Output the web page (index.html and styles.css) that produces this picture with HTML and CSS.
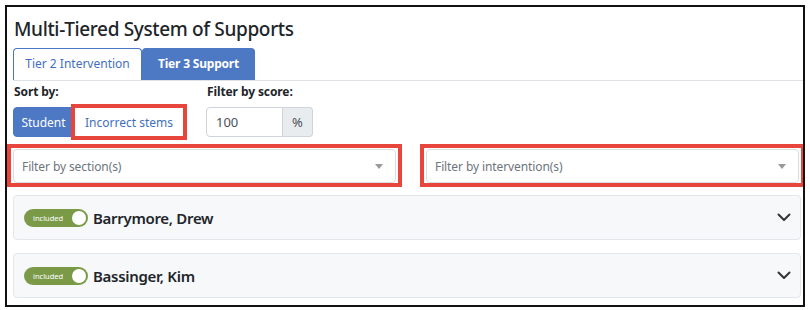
FILE: index.html
```html
<!DOCTYPE html>
<html lang="en">
  <head>
    <meta charset="UTF-8" />
    <meta name="viewport" content="width=device-width, initial-scale=1.0" />
    <title>Multi-Tiered System of Supports</title>
    <link rel="stylesheet" href="styles.css">
  </head>

  <body>
    <div class="frame">
      <div class="content">
        <h1 class="title">Multi-Tiered System of Supports</h1>

        <ul class="tabs">
          <li class="tab">Tier 2 Intervention</li>
          <li class="tab active">Tier 3 Support</li>
        </ul>

        <div class="controls">
          <div class="sort">
            <label>Sort by:</label>
            <div class="btn-group">
              <button class="btn btn-primary">Student</button>
              <button class="btn btn-outline marked">Incorrect stems</button>
            </div>
          </div>
          <div class="score">
            <label for="score">Filter by score:</label>
            <div class="input-group">
              <input type="text" id="score" value="100" />
              <span class="addon">%</span>
            </div>
          </div>
        </div>

        <div class="filters">
          <div class="mark-box">
            <div class="select">
              <span>Filter by section(s)</span>
              <span class="caret"></span>
            </div>
          </div>
          <div class="mark-box">
            <div class="select">
              <span>Filter by intervention(s)</span>
              <span class="caret"></span>
            </div>
          </div>
        </div>

        <div class="accordion">
          <div class="item">
            <div class="toggle"><span>included</span><span class="knob"></span></div>
            <span class="name">Barrymore, Drew</span>
            <svg class="chevron" width="14" height="9" viewBox="0 0 14 9">
              <path d="M1.5 1.5 L7 7 L12.5 1.5" fill="none" stroke="#333" stroke-width="2" stroke-linecap="round" stroke-linejoin="round" />
            </svg>
          </div>
          <div class="item">
            <div class="toggle"><span>included</span><span class="knob"></span></div>
            <span class="name">Bassinger, Kim</span>
            <svg class="chevron" width="14" height="9" viewBox="0 0 14 9">
              <path d="M1.5 1.5 L7 7 L12.5 1.5" fill="none" stroke="#333" stroke-width="2" stroke-linecap="round" stroke-linejoin="round" />
            </svg>
          </div>
        </div>
      </div>
    </div>
  </body>
</html>
```

FILE: styles.css
```css
* {
  margin: 0;
  padding: 0;
  box-sizing: border-box;
}

body {
  font-family: "Noto Sans", "Open Sans", sans-serif;
  background-color: #fff;
  color: #212529;
}

.frame {
  margin: 5px;
  width: 800px;
  height: 302px;
  border: 2px solid #111;
  overflow: hidden;
}

.content {
  padding: 0 0 0 6px;
}

.title {
  font-size: 19px;
  font-weight: 500;
  letter-spacing: -0.35px;
  line-height: 23px;
  margin: 11px 0 7px 1px;
}

/* tabs */
.tabs {
  list-style: none;
  display: flex;
  border-bottom: 1px solid #dee2e6;
  height: 33px;
}

.tab {
  font-size: 12px;
  line-height: 30px;
  text-align: center;
  white-space: nowrap;
  color: #3f6fc0;
  border: 1px solid #4a76c2;
  border-bottom: none;
  border-radius: 4px 4px 0 0;
  width: 129px;
}

.tab.active {
  background-color: #4d78c4;
  border-color: #4d78c4;
  color: #fff;
  font-weight: bold;
  letter-spacing: -0.2px;
  width: 113px;
}

/* sort + score */
.controls {
  display: flex;
  margin-top: 3px;
}

.controls label {
  display: block;
  font-size: 12px;
  font-weight: bold;
  letter-spacing: -0.1px;
  line-height: 16px;
  margin-bottom: 7px;
  margin-left: 1px;
  white-space: nowrap;
}

.sort {
  width: 193px;
}

.btn-group {
  display: flex;
}

.btn {
  font-family: inherit;
  font-size: 12px;
  height: 30px;
  padding: 0;
  white-space: nowrap;
  border: 1px solid #4a76c2;
  cursor: pointer;
}

.btn-primary {
  background-color: #4d78c4;
  color: #fff;
  border-radius: 4px 0 0 4px;
  width: 61px;
}

.btn-outline {
  background-color: #fff;
  color: #3f6fc0;
  border-radius: 0 4px 4px 0;
  width: 110px;
}

.marked {
  border-radius: 0;
  outline: 4px solid #e8453d;
  outline-offset: -1px;
}

.input-group {
  display: flex;
  height: 30px;
}

.input-group input {
  font-family: inherit;
  font-size: 13px;
  color: #495057;
  width: 77px;
  padding: 0 9px;
  border: 1px solid #ced4da;
  border-radius: 4px 0 0 4px;
}

.addon {
  width: 30px;
  font-size: 13px;
  line-height: 28px;
  text-align: center;
  color: #495057;
  background-color: #e9ecef;
  border: 1px solid #ced4da;
  border-left: none;
  border-radius: 0 4px 4px 0;
}

/* filters */
.filters {
  display: grid;
  grid-template-columns: 395px 1fr;
  gap: 18px;
  margin: 7px -2px 0 -6px;
}

.mark-box {
  border: 4px solid #e8453d;
  padding: 1px 2px 0 2px;
}

.select {
  display: flex;
  align-items: center;
  justify-content: space-between;
  height: 34px;
  padding: 0 12px 0 8px;
  border: 1px solid #d9dde2;
  border-radius: 4px;
  font-size: 12px;
  letter-spacing: -0.1px;
  color: #6c757d;
}

.caret {
  width: 0;
  height: 0;
  border-left: 4px solid transparent;
  border-right: 4px solid transparent;
  border-top: 5px solid #999;
}

/* accordion */
.accordion {
  margin-top: 8px;
  width: 788px;
}

.item {
  display: flex;
  align-items: center;
  height: 45px;
  padding: 0 9px 0 10px;
  margin-bottom: 13px;
  background-color: #f7f8fa;
  border: 1px solid #e3e6ea;
  border-radius: 4px;
}

.toggle {
  display: flex;
  align-items: center;
  justify-content: space-between;
  width: 64px;
  height: 18px;
  padding: 0 2px 0 9px;
  border-radius: 9px;
  background-color: #7b9a48;
  color: #fff;
  font-size: 7.5px;
}

.knob {
  width: 14px;
  height: 14px;
  border-radius: 50%;
  background-color: #fff;
}

.name {
  font-size: 15px;
  font-weight: 600;
  letter-spacing: -0.3px;
  margin-left: 5px;
  flex: 1;
}
```
